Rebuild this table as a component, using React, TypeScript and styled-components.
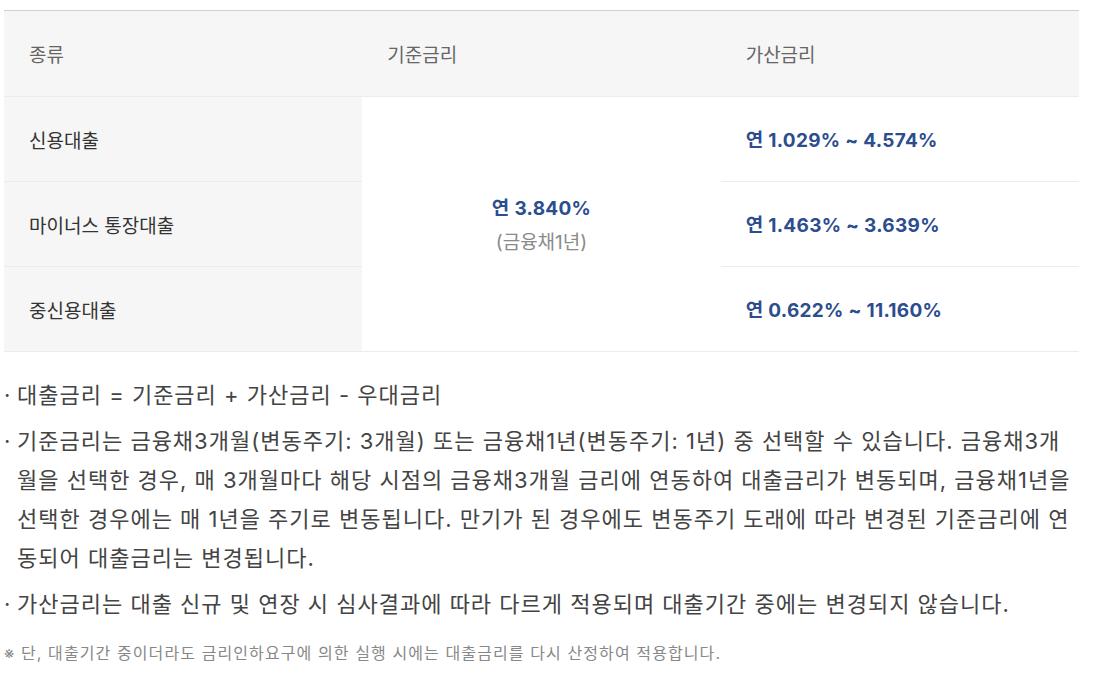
import React from "react";
import styled, { createGlobalStyle } from "styled-components";

interface RateRow {
  type: string;
  addRate: string;
}

const rows: RateRow[] = [
  { type: "신용대출", addRate: "연 1.029% ~ 4.574%" },
  { type: "마이너스 통장대출", addRate: "연 1.463% ~ 3.639%" },
  { type: "중신용대출", addRate: "연 0.622% ~ 11.160%" },
];

const notes: string[] = [
  "대출금리 = 기준금리 + 가산금리 - 우대금리",
  "기준금리는 금융채3개월(변동주기: 3개월) 또는 금융채1년(변동주기: 1년) 중 선택할 수 있습니다. 금융채3개월을 선택한 경우, 매 3개월마다 해당 시점의 금융채3개월 금리에 연동하여 대출금리가 변동되며, 금융채1년을 선택한 경우에는 매 1년을 주기로 변동됩니다. 만기가 된 경우에도 변동주기 도래에 따라 변경된 기준금리에 연동되어 대출금리는 변경됩니다.",
  "가산금리는 대출 신규 및 연장 시 심사결과에 따라 다르게 적용되며 대출기간 중에는 변경되지 않습니다.",
];

const GlobalStyle = createGlobalStyle`
  body {
    margin: 0;
    background: #fff;
    font-family: Inter, "Noto Sans CJK KR", "Noto Sans", sans-serif;
    color: #333;
  }
`;

const Wrap = styled.div`
  padding: 10px 15px 0 4px;
`;

const Table = styled.table`
  width: 100%;
  border-collapse: collapse;
  table-layout: fixed;
  border-top: 1px solid #cfcfcf;
  border-bottom: 1px solid #ececec;
`;

const HeadCell = styled.th`
  height: 85px;
  padding: 0 25px;
  background: #f6f6f6;
  border-bottom: 1px solid #ececec;
  text-align: left;
  font-weight: 400;
  font-size: 19px;
  color: #666;
`;

const TypeCell = styled.td`
  height: 84px;
  padding: 0 25px;
  background: #f6f6f6;
  border-bottom: 1px solid #ececec;
  font-size: 19px;
  color: #333;
`;

const BaseCell = styled.td`
  text-align: center;
  vertical-align: middle;
  background: #fff;
`;

const AddCell = styled.td`
  padding: 3px 25px 0;
  border-bottom: 1px solid #ececec;
`;

const Rate = styled.div`
  font-size: 19px;
  font-weight: 700;
  letter-spacing: 0.3px;
  color: #2c4d8e;
  line-height: 30px;
`;

const RateSub = styled.div`
  margin-top: 7px;
  font-size: 19px;
  color: #8a8a8a;
  line-height: 24px;
`;

const NoteList = styled.ul`
  list-style: none;
  margin: 24px 0 0;
  padding: 0;
`;

const NoteItem = styled.li`
  position: relative;
  padding-left: 13px;
  margin-bottom: 7px;
  font-size: 22px;
  letter-spacing: 1px;
  line-height: 39px;
  color: #444;

  &::before {
    content: "·";
    position: absolute;
    left: 0;
  }
`;

const FootNote = styled.p`
  margin: 16px 0 0;
  font-size: 16px;
  letter-spacing: 1.1px;
  color: #888;
`;

const App: React.FC = () => {
  return (
    <Wrap>
      <GlobalStyle />
      <Table>
        <thead>
          <tr>
            <HeadCell>종류</HeadCell>
            <HeadCell>기준금리</HeadCell>
            <HeadCell>가산금리</HeadCell>
          </tr>
        </thead>
        <tbody>
          {rows.map((row, i) => (
            <tr key={row.type}>
              <TypeCell>{row.type}</TypeCell>
              {i === 0 && (
                <BaseCell rowSpan={3}>
                  <Rate>연 3.840%</Rate>
                  <RateSub>(금융채1년)</RateSub>
                </BaseCell>
              )}
              <AddCell>
                <Rate>{row.addRate}</Rate>
              </AddCell>
            </tr>
          ))}
        </tbody>
      </Table>
      <NoteList>
        {notes.map((note) => (
          <NoteItem key={note}>{note}</NoteItem>
        ))}
      </NoteList>
      <FootNote>
        ※ 단, 대출기간 중이더라도 금리인하요구에 의한 실행 시에는 대출금리를 다시 산정하여 적용합니다.
      </FootNote>
    </Wrap>
  );
};

export default App;
